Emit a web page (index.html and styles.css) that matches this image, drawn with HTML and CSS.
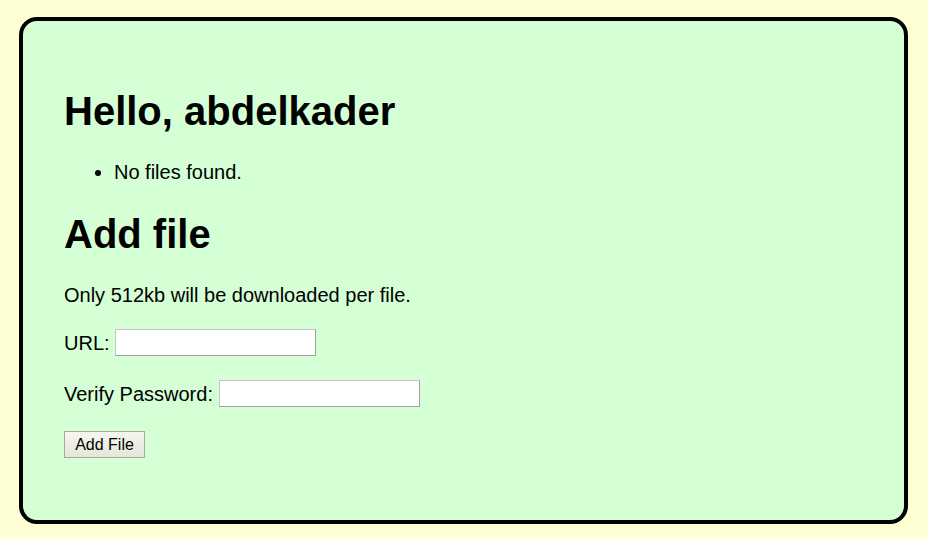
FILE: index.html
```html
<!DOCTYPE html>
<html>
<head>
<meta charset="utf-8">
<link rel="stylesheet" href="styles.css">
</head>
<body>
<div class="box">
  <h1>Hello, abdelkader</h1>
  <ul>
    <li>No files found.</li>
  </ul>
  <h1>Add file</h1>
  <p>Only 512kb will be downloaded per file.</p>
  <form>
    <p>URL: <input class="field" type="text"></p>
    <p>Verify Password: <input class="field" type="password"></p>
    <p><button class="btn" type="button">Add File</button></p>
  </form>
</div>
</body>
</html>
```
FILE: styles.css
```css
html, body {
  margin: 0;
  padding: 0;
  background: #ffffd5;
}
body {
  padding: 17px 20px 17px 19px;
  font-family: "Liberation Sans", Arial, sans-serif;
  font-size: 20px;
  color: #000;
}
.box {
  background: #d5ffd5;
  border: 4px solid #000;
  border-radius: 18px;
  padding: 40px 41px 42px 41px;
}
h1 {
  font-size: 40px;
  font-weight: bold;
  margin: 27px 0;
  line-height: 46px;
}
ul {
  margin: 20px 0;
  padding-left: 50px;
}
li {
  line-height: 23px;
}
p {
  margin: 20px 0;
  line-height: 23px;
}
form {
  margin: 0;
}
.field {
  box-sizing: border-box;
  width: 201px;
  height: 27px;
  margin: 2px 0;
  padding: 1px 2px;
  font-family: "Liberation Sans", Arial, sans-serif;
  font-size: 16px;
  background: #fff;
  border: 1px solid;
  border-color: #c4c4c4 #a0a0a0 #a0a0a0 #c4c4c4;
  vertical-align: 2px;
  outline: none;
}
.btn {
  box-sizing: border-box;
  width: 81px;
  height: 27px;
  margin: 2px 0 0 0;
  padding: 0;
  font-family: "Liberation Sans", Arial, sans-serif;
  font-size: 16px;
  color: #000;
  background: linear-gradient(#f6f6f0, #e4e6d6);
  border: 1px solid #a8a8a0;
  border-radius: 0;
  vertical-align: top;
}
```
